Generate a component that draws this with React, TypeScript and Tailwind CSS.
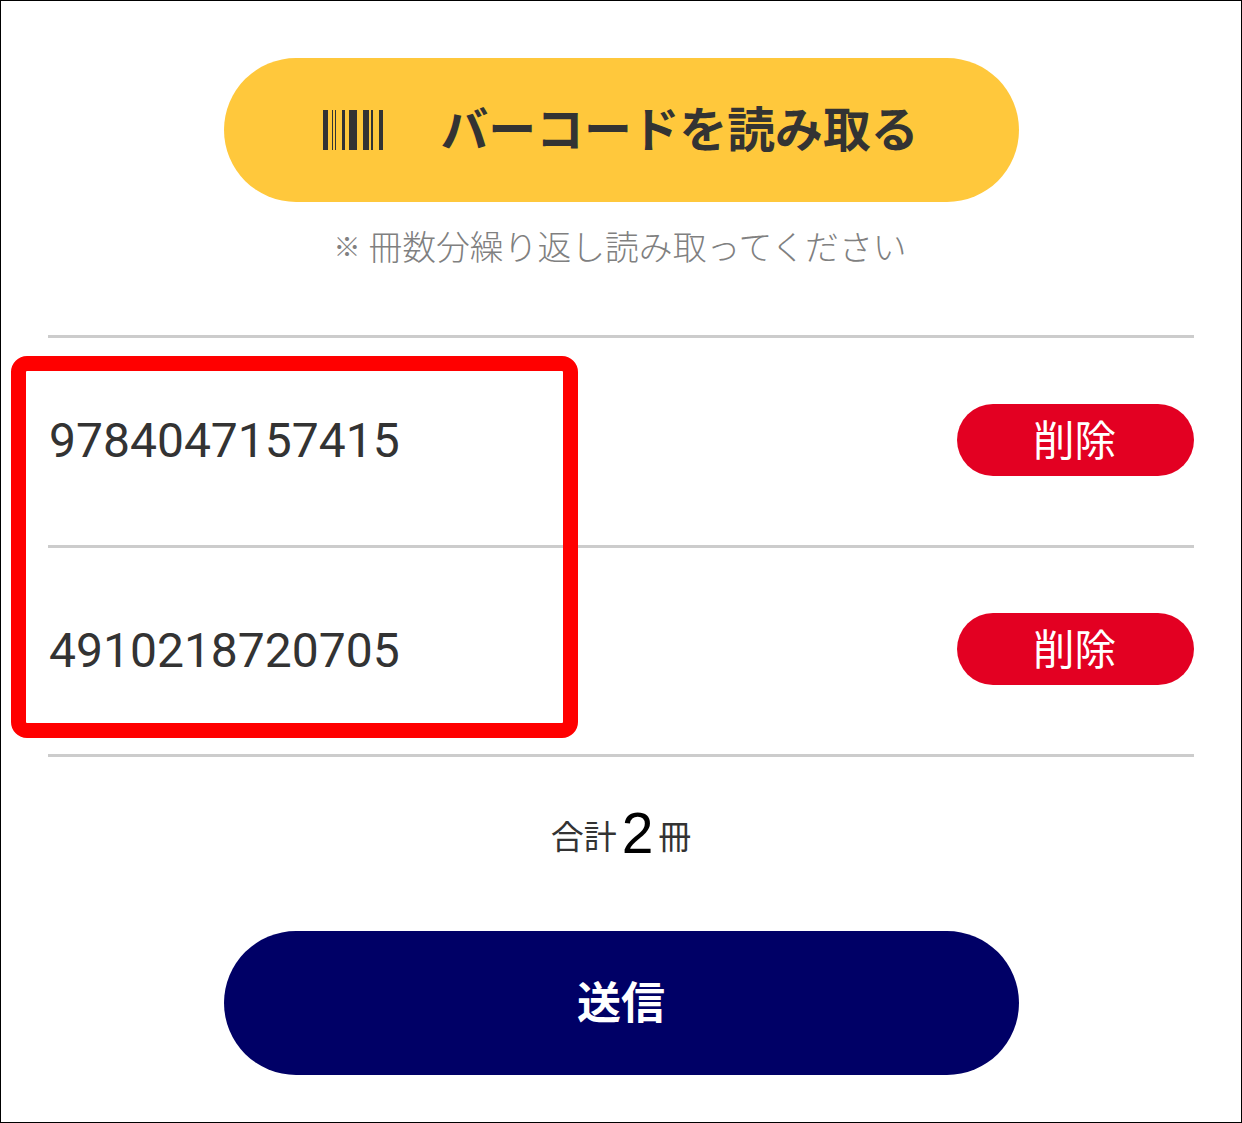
import React from 'react';

const codes = ['9784047157415', '4910218720705'];

const BarcodeIcon: React.FC = () => (
  <svg width="60" height="40" viewBox="0 0 60 40" className="shrink-0" fill="#333333">
    <rect x="0" y="0" width="5" height="40" />
    <rect x="9" y="0" width="1" height="40" />
    <rect x="12" y="0" width="1" height="40" />
    <rect x="19" y="0" width="3" height="40" />
    <rect x="26" y="0" width="8" height="40" />
    <rect x="40" y="0" width="6" height="40" />
    <rect x="48" y="0" width="2" height="40" />
    <rect x="56" y="0" width="4" height="40" />
  </svg>
);

export default function App() {
  return (
    <div className="relative w-[1242px] h-[1123px] bg-white border border-black font-['Liberation_Sans','Noto_Sans_CJK_JP',sans-serif] text-[#333333] overflow-hidden">
      <div className="flex flex-col items-center pt-[57px]">
        <button className="w-[795px] h-[144px] rounded-[72px] bg-[#ffc83c] flex items-center justify-center gap-[58px] pr-px">
          <BarcodeIcon />
          <span className="text-[47.8px] font-bold leading-none mt-[2px]">バーコードを読み取る</span>
        </button>
        <p className="mt-[27px] pr-[2px] text-[33.8px] leading-[38px] text-[#808080] font-light flex items-center">
          <span className="text-[27px] font-bold mr-[11px] w-[24px] text-center leading-none">※</span>
          冊数分繰り返し読み取ってください
        </p>
      </div>

      <div className="mx-[47px] mt-[68px] border-t-[3px] border-[#cccccc]">
        {codes.map((code) => (
          <div key={code} className="h-[209.5px] flex items-center justify-between border-b-[3px] border-[#cccccc]">
            <span className="text-[48px] leading-none pl-px font-['Roboto',sans-serif]">{code}</span>
            <button className="w-[237px] h-[72px] mb-[3px] pr-[2px] pt-[3px] rounded-[36px] bg-[#e30022] text-white text-[41.5px] leading-none">削除</button>
          </div>
        ))}
      </div>

      <div className="flex items-baseline justify-center gap-[5px] mt-[48px] h-[62px]">
        <span className="text-[33px] -translate-y-[4px]">合計</span>
        <span className="text-[57px] text-black leading-none">2</span>
        <span className="text-[33px] -translate-y-[4px]">冊</span>
      </div>

      <div className="flex justify-center mt-[64px]">
        <button className="w-[795px] h-[144px] pt-[2px] rounded-[72px] bg-[#000066] text-white text-[44px] font-bold leading-none">送信</button>
      </div>

      <div className="absolute left-[10px] top-[355px] w-[567px] h-[382px] border-[15px] border-[#ff0000] rounded-[16px]" />
    </div>
  );
}
